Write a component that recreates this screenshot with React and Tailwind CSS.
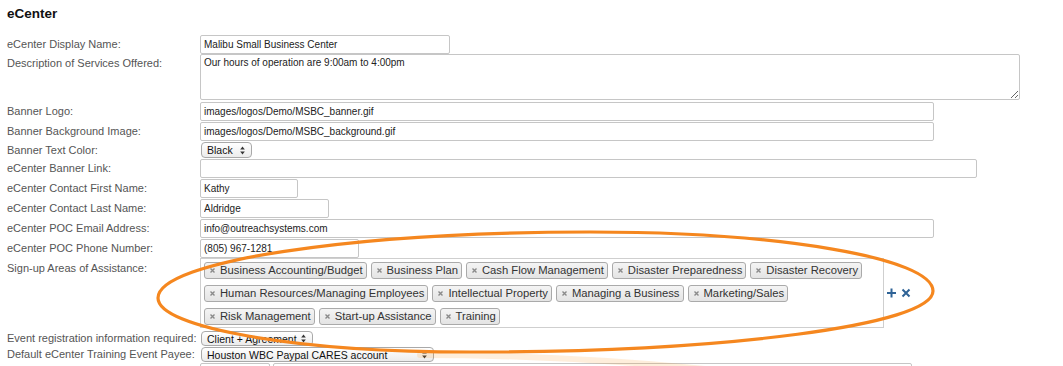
import React from 'react'

const Input = ({ className, value }) => (
    <input
        readOnly
        value={value}
        className={`h-[19px] rounded-[2px] border border-[#c6c6c6] bg-white px-[3px] text-[10px] text-[#222] outline-none ${className}`}
    />
)

const Arrows = () => (
    <svg width="5" height="9" viewBox="0 0 5 9" className="shrink-0">
        <path d="M2.5 0.5 L4.8 3.6 L0.2 3.6 Z" fill="#333" />
        <path d="M2.5 8.5 L4.8 5.4 L0.2 5.4 Z" fill="#333" />
    </svg>
)

const Select = ({ className, children }) => (
    <div className={`flex items-center justify-between rounded-[4px] border border-[#a9a9a9] bg-linear-to-b from-white to-[#ececec] pl-[5px] pr-[6px] text-[10.5px] leading-[12px] text-[#111] ${className}`}>
        <span className="whitespace-nowrap">{children}</span>
        <Arrows />
    </div>
)

const Tag = ({ children }) => (
    <span className="relative flex h-[17px] items-center whitespace-nowrap rounded-[3px] border border-[#aaa] bg-linear-to-b from-[#f4f4f4] to-[#e4e4e4] pl-[15px] pr-[3px] text-[11.25px] leading-[13px] text-[#333]">
        <svg width="5" height="5" viewBox="0 0 5 5" className="absolute left-[5px] top-[5px]">
            <path d="M0.5 0.5 L4.5 4.5 M4.5 0.5 L0.5 4.5" stroke="#8a8a8a" strokeWidth="1.4" />
        </svg>
        {children}
    </span>
)

const Label = ({ children, className }) => (
    <div className={`w-[193px] shrink-0 whitespace-nowrap text-[11px] text-[#555] ${className}`}>{children}</div>
)

const areas = [
    'Business Accounting/Budget',
    'Business Plan',
    'Cash Flow Management',
    'Disaster Preparedness',
    'Disaster Recovery',
    'Human Resources/Managing Employees',
    'Intellectual Property',
    'Managing a Business',
    'Marketing/Sales',
    'Risk Management',
    'Start-up Assistance',
    'Training',
]

export default function App() {
    return (
        <div className="relative h-[366px] w-full overflow-hidden bg-white font-['Liberation_Sans',Arial,sans-serif] text-[#222]">
            <div className="pl-[7px]">
                <h2 className="h-[33px] pt-[6px] text-[13.5px] font-bold leading-[16px] text-[#111]">eCenter</h2>

                <div className="flex h-[21px] items-end">
                    <Label className="leading-[19px]">eCenter Display Name:</Label>
                    <Input className="w-[250px]" value="Malibu Small Business Center" />
                </div>

                <div className="flex h-[47px] items-start">
                    <Label className="pt-[2px] leading-[14px]">Description of Services Offered:</Label>
                    <textarea
                        readOnly
                        value="Our hours of operation are 9:00am to 4:00pm"
                        className="h-[46px] w-[820px] rounded-[2px] border border-[#c6c6c6] px-[3px] pt-[2px] text-[10px] leading-[12px] text-[#222] outline-none"
                    />
                </div>

                <div className="flex h-[20px] items-end">
                    <Label className="leading-[19px]">Banner Logo:</Label>
                    <Input className="w-[734px]" value="images/logos/Demo/MSBC_banner.gif" />
                </div>

                <div className="flex h-[20px] items-end">
                    <Label className="leading-[19px]">Banner Background Image:</Label>
                    <Input className="w-[734px]" value="images/logos/Demo/MSBC_background.gif" />
                </div>

                <div className="flex h-[17px] items-end">
                    <Label className="leading-[16px]">Banner Text Color:</Label>
                    <Select className="ml-px h-[16px] w-[51px]">Black</Select>
                </div>

                <div className="flex h-[20px] items-end">
                    <Label className="leading-[19px]">eCenter Banner Link:</Label>
                    <Input className="w-[777px]" value="" />
                </div>

                <div className="flex h-[20px] items-end">
                    <Label className="leading-[19px]">eCenter Contact First Name:</Label>
                    <Input className="w-[98px]" value="Kathy" />
                </div>

                <div className="flex h-[20px] items-end">
                    <Label className="leading-[19px]">eCenter Contact Last Name:</Label>
                    <Input className="w-[129px]" value="Aldridge" />
                </div>

                <div className="flex h-[20px] items-end">
                    <Label className="leading-[19px]">eCenter POC Email Address:</Label>
                    <Input className="w-[734px]" value="info@outreachsystems.com" />
                </div>

                <div className="flex h-[20px] items-end">
                    <Label className="leading-[19px]">eCenter POC Phone Number:</Label>
                    <Input className="w-[159px]" value="(805) 967-1281" />
                </div>

                <div className="flex h-[70px] items-center">
                    <Label className="self-start pt-[3px] leading-[14px]">Sign-up Areas of Assistance:</Label>
                    <div className="flex h-[70px] w-[684px] flex-wrap content-start gap-x-[4px] gap-y-[6px] border border-[#cfcfcf] pl-[3px] pt-[3px]">
                        {areas.map((a) => (
                            <Tag key={a}>{a}</Tag>
                        ))}
                    </div>
                    <svg width="26" height="10" viewBox="0 0 26 10" className="ml-[3px]">
                        <path d="M0 5 H9 M4.5 0.5 V9.5" stroke="#2f6396" strokeWidth="2" />
                        <path d="M15.5 1.5 L22.5 8.5 M22.5 1.5 L15.5 8.5" stroke="#2f6396" strokeWidth="2" />
                    </svg>
                </div>

                <div className="flex h-[18px] items-end">
                    <Label className="leading-[15px]">Event registration information required:</Label>
                    <Select className="ml-px h-[15px] w-[112px]">Client + Agreement</Select>
                </div>

                <div className="flex h-[16px] items-end">
                    <Label className="leading-[15px]">Default eCenter Training Event Payee:</Label>
                    <Select className="ml-px h-[15px] w-[233px]">Houston WBC Paypal CARES account</Select>
                </div>

                <div className="flex h-[20px] items-start pt-px">
                    <Label className="leading-[19px]"></Label>
                    <Input className="w-[70px]" value="" />
                    <Input className="ml-[3px] w-[639px]" value="" />
                </div>
            </div>

            <svg className="pointer-events-none absolute left-0 top-0" width="1063" height="366" viewBox="0 0 1063 366">
                <path d="M420 355 Q560 355 705 369" fill="none" stroke="#f7941d" strokeOpacity="0.16" strokeWidth="6" strokeLinecap="round" />
                <path
                    d="M158 298 C158 261.5 351 232 590 232 C779 232 933 258 933 291 C933 325 726 352 470 352 C298 352 158 328 158 298 Z"
                    fill="none"
                    stroke="#f5871f"
                    strokeWidth="3.2"
                />
            </svg>
        </div>
    )
}
